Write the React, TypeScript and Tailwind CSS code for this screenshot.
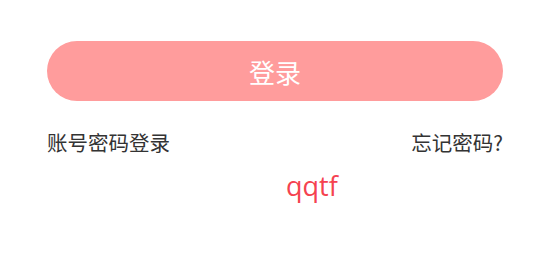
export default function App() {
  return (
    <div className="w-[550px] h-[275px] bg-white font-['Noto_Sans_CJK_SC','Noto_Sans',sans-serif]">
      <div className="px-[47px] pt-[41px]">
        <button className="w-full h-[60px] rounded-full bg-[#ff9c9c] text-white text-[26px] flex items-center justify-center">
          登录
        </button>
        <div className="mt-[27px] flex items-center justify-between text-[20.5px] leading-[28px] text-[#333333]">
          <span>账号密码登录</span>
          <span>忘记密码?</span>
        </div>
        <div className="mt-[12px] pl-[239px] text-[27px] leading-[36px] text-[#f5424f] font-['Open_Sans',sans-serif]">
          qqtf
        </div>
      </div>
    </div>
  );
}
